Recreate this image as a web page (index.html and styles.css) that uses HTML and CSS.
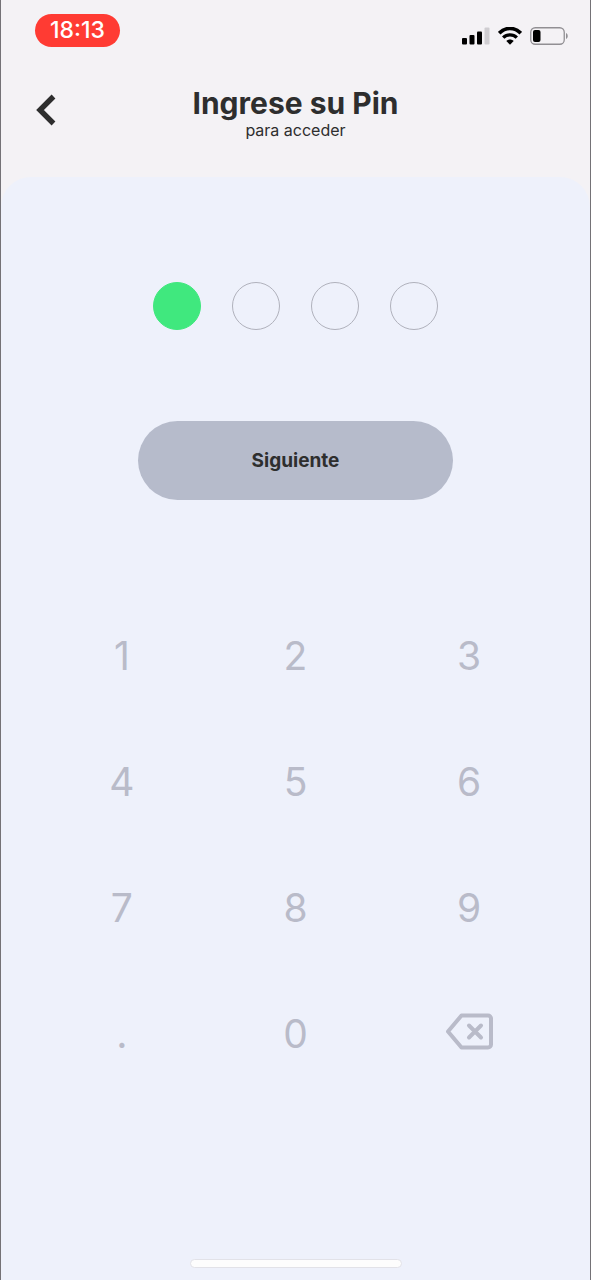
FILE: index.html
```html
<!DOCTYPE html>
<html lang="es">
<head>
<meta charset="utf-8">
<meta name="viewport" content="width=device-width, initial-scale=1">
<title>Ingrese su Pin</title>
<link rel="stylesheet" href="styles.css">
</head>
<body>
<div class="screen">
  <div class="status">
    <time class="clock">18:13</time>
    <div class="status-icons">
      <svg width="28" height="18" viewBox="0 0 28 18" aria-hidden="true">
        <rect x="0" y="11" width="5" height="6.500" rx="1"/>
        <rect x="7.500" y="8" width="5" height="9.500" rx="1"/>
        <rect x="15" y="4.500" width="5" height="13" rx="1"/>
        <rect x="22.500" y="0.500" width="5" height="17" rx="1" fill="#cfcdd1"/>
      </svg>
      <svg width="24" height="18" viewBox="0 0 24 18" fill="none" stroke="#000" aria-hidden="true">
        <path d="M1.200 6.200C7.300-.2 16.700-.2 22.800 6.200" stroke-width="3.600"/>
        <path d="M5.200 10.600C9 6.900 15 6.900 18.800 10.600" stroke-width="3.400"/>
        <path d="M8.300 14C10.400 12 13.600 12 15.700 14L12 17.700Z" fill="#000" stroke="none"/>
      </svg>
      <svg width="38" height="18" viewBox="0 0 38 18" aria-hidden="true">
        <rect x="0.750" y="0.750" width="33.500" height="16.500" rx="4.500" fill="none" stroke="#918f93" stroke-width="1.300"/>
        <rect x="3" y="3" width="7.500" height="12" rx="2"/>
        <path d="M36 6C38.300 6.800 38.300 11.200 36 12Z" fill="#918f93"/>
      </svg>
    </div>
  </div>
  <header class="header">
    <button class="back" type="button" aria-label="Volver">
      <svg width="22" height="34" viewBox="0 0 22 34" fill="none" stroke="#2e2e2e" stroke-width="5.400" aria-hidden="true"><path d="M18.500 3.500L5 17L18.500 30.500"/></svg>
    </button>
    <div class="titles">
      <h1 class="title">Ingrese su Pin</h1>
      <p class="subtitle">para acceder</p>
    </div>
  </header>
  <main class="panel">
    <div class="dots" role="img" aria-label="1 de 4">
      <span class="dot dot-filled"></span>
      <span class="dot"></span>
      <span class="dot"></span>
      <span class="dot"></span>
    </div>
    <button class="next" type="button">Siguiente</button>
    <div class="keypad">
      <button class="key" type="button">1</button>
      <button class="key" type="button">2</button>
      <button class="key" type="button">3</button>
      <button class="key" type="button">4</button>
      <button class="key" type="button">5</button>
      <button class="key" type="button">6</button>
      <button class="key" type="button">7</button>
      <button class="key" type="button">8</button>
      <button class="key" type="button">9</button>
      <button class="key" type="button">.</button>
      <button class="key" type="button">0</button>
      <button class="key" type="button" aria-label="Borrar">
        <svg width="48" height="42" viewBox="0 0 48 42" fill="none" stroke="currentColor" stroke-width="4" stroke-linecap="round" stroke-linejoin="round" aria-hidden="true">
          <path d="M16.500 3.500H43A3 3 0 0 1 46 6.500V32.500A3 3 0 0 1 43 35.500H16.500L3 19.500Z"/>
          <path d="M24 13.500L36 25.500M36 13.500L24 25.500"/>
        </svg>
      </button>
    </div>
    <div class="home-bar"></div>
  </main>
</div>
</body>
</html>
```
FILE: styles.css
```css
* {
  box-sizing: border-box;
}

body {
  margin: 0;
  font-family: Inter, "Liberation Sans", sans-serif;
  color: #2e2e2e;
  background: #f4f2f5;
}

button {
  padding: 0;
  border: 0;
  background: none;
  color: inherit;
  font: inherit;
  cursor: pointer;
}

svg {
  display: block;
}

.screen {
  display: flex;
  flex-direction: column;
  min-height: 100vh;
  border: solid #747276;
  border-width: 0 1px;
}

.status {
  display: flex;
  justify-content: space-between;
  align-items: flex-start;
  padding: 14px 22px 0 34px;
}

.clock {
  padding: 0 15px;
  border-radius: 17px;
  background: #ff3b33;
  color: #fff;
  font-size: 23px;
  font-weight: 500;
  line-height: 33px;
}

.status-icons {
  display: flex;
  gap: 8px;
  padding-top: 13px;
}

.header {
  display: grid;
  grid-template-columns: 60px 1fr 60px;
  align-items: start;
  padding: 40px 0 36px;
}

.back {
  justify-self: end;
  margin: 6px 4px 0 0;
}

.titles {
  text-align: center;
}

.title {
  margin: 0;
  font-size: 30px;
  font-weight: 700;
  line-height: 32px;
}

.subtitle {
  margin: 0;
  font-size: 16px;
  line-height: 22px;
}

.panel {
  display: flex;
  flex: 1;
  flex-direction: column;
  align-items: center;
  padding: 105px 34px 12px;
  border-radius: 30px 30px 0 0;
  background: #eef1fb;
}

.dots {
  display: flex;
  gap: 31px;
}

.dot {
  width: 48px;
  height: 48px;
  border: 1px solid #b0b1bc;
  border-radius: 50%;
}

.dot-filled {
  border-color: #40e87e;
  background: #40e87e;
}

.next {
  width: 100%;
  max-width: 315px;
  margin-top: 91px;
  border-radius: 40px;
  background: #b6bbcb;
  font-size: 19px;
  font-weight: 700;
  line-height: 79px;
}

.keypad {
  display: grid;
  grid-template-columns: repeat(3, 1fr);
  grid-auto-rows: 126px;
  width: 100%;
  margin-top: 92px;
}

.key {
  display: flex;
  align-items: center;
  justify-content: center;
  color: #b9bbc9;
  font-size: 39px;
}

.home-bar {
  width: 212px;
  height: 9px;
  margin-top: auto;
  border: 1px solid #e2e2e8;
  border-radius: 5px;
  background: #fdfdfd;
}
```
